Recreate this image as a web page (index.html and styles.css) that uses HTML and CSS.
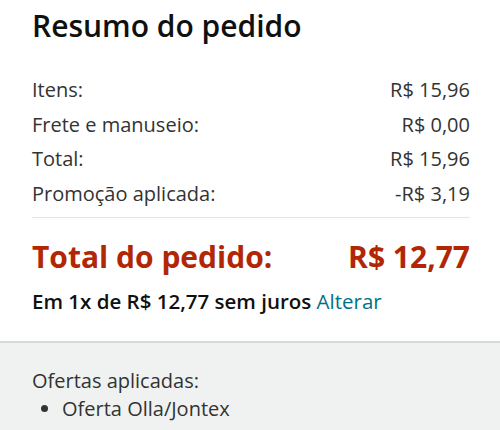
FILE: index.html
```html
<!DOCTYPE html>
<html lang="pt-BR">
<head>
<meta charset="utf-8">
<link rel="stylesheet" href="styles.css">
</head>
<body>
<div class="summary">
  <h1 class="title">Resumo do pedido</h1>
  <div class="rows">
    <div class="row"><span>Itens:</span><span>R$ 15,96</span></div>
    <div class="row"><span>Frete e manuseio:</span><span>R$ 0,00</span></div>
    <div class="row"><span>Total:</span><span>R$ 15,96</span></div>
    <div class="row"><span>Promoção aplicada:</span><span>-R$ 3,19</span></div>
  </div>
  <div class="grand"><span>Total do pedido:</span><span>R$ 12,77</span></div>
  <p class="install">Em 1x de R$ 12,77 sem juros <a class="link" href="#">Alterar</a></p>
</div>
<div class="offers">
  <div class="offers-title">Ofertas aplicadas:</div>
  <ul class="offers-list">
    <li>Oferta Olla/Jontex</li>
  </ul>
</div>
</body>
</html>
```
FILE: styles.css
```css
html, body {
  margin: 0;
  padding: 0;
  background: #fff;
}
body {
  font-family: "Open Sans", "Noto Sans", sans-serif;
  color: #0f1111;
}
.summary {
  padding: 6px 30px 0 32px;
}
.title {
  margin: 0;
  font-size: 30px;
  font-weight: 600;
  line-height: 40px;
  color: #0f1111;
}
.rows {
  margin-top: 27px;
  padding-bottom: 6px;
  border-bottom: 1px solid #e3e6e6;
}
.row {
  display: flex;
  justify-content: space-between;
  font-size: 20px;
  line-height: 34.5px;
  color: #333;
}
.grand {
  display: flex;
  justify-content: space-between;
  margin-top: 19px;
  font-size: 30px;
  font-weight: 700;
  line-height: 40px;
  color: #b12704;
}
.install {
  margin: 12px 0 0;
  font-size: 20.5px;
  font-weight: 600;
  line-height: 24px;
  color: #0f1111;
}
.link {
  color: #007185;
  font-weight: 400;
  text-decoration: none;
}
.offers {
  margin-top: 28px;
  border-top: 2px solid #d5d9d9;
  background: #f0f2f2;
  padding: 24px 32px 20px;
  font-size: 20px;
  color: #333;
}
.offers-title {
  line-height: 28px;
}
.offers-list {
  margin: 0;
  padding-left: 30px;
  line-height: 28px;
}
```
